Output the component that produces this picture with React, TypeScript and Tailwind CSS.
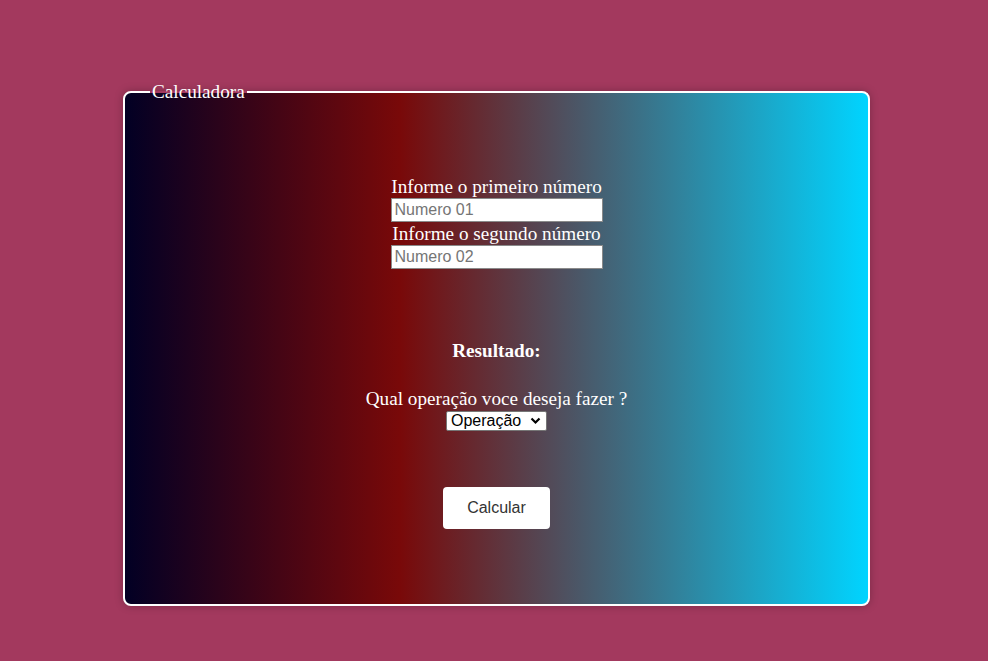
export default function App() {
  return (
    <div className="min-h-screen w-full bg-[#a3395e] pt-[81px]">
      {/* calculator card */}
      <fieldset className="ml-[123px] w-[747px] h-[525px] rounded-lg border-2 border-white bg-[linear-gradient(90deg,#020024_0%,#790909_37%,#00d4ff_100%)] shadow-[0_0_8px_rgba(0,0,0,0.25)] font-['Liberation_Serif',serif] text-[19.2px] text-white">
        <legend className="ml-[25px] px-[2px] leading-[22px]">Calculadora</legend>

        <div className="flex flex-col items-center pt-[72px]">
          <label className="leading-[23px]">Informe o primeiro número</label>
          <input
            type="text"
            placeholder="Numero 01"
            className="w-[212px] h-[24px] bg-white border border-[#8a8a8a] px-[3px] font-['Liberation_Sans',sans-serif] text-[16px] text-black placeholder:text-[#757575] outline-none"
          />
          <label className="leading-[23px]">Informe o segundo número</label>
          <input
            type="text"
            placeholder="Numero 02"
            className="w-[212px] h-[24px] bg-white border border-[#8a8a8a] px-[3px] font-['Liberation_Sans',sans-serif] text-[16px] text-black placeholder:text-[#757575] outline-none"
          />

          <h3 className="mt-[71px] font-bold leading-[22px]">Resultado:</h3>

          <p className="mt-[25px] leading-[23px]">Qual operação voce deseja fazer ?</p>
          <div className="relative flex mt-[1px]">
            <select className="block appearance-none w-[101px] h-[20px] bg-white border border-[#767676] rounded-[2px] pl-[4px] pr-[20px] font-['Liberation_Sans',sans-serif] text-[16px] leading-[18px] text-black">
              <option>Operação</option>
              <option>Soma</option>
              <option>Subtração</option>
              <option>Multiplicação</option>
              <option>Divisão</option>
            </select>
            <svg className="pointer-events-none absolute right-[6px] top-[6px]" width="11" height="8" viewBox="0 0 11 8">
              <path d="M1.5 1.5 L5.5 5.5 L9.5 1.5" fill="none" stroke="#000" strokeWidth="2.2" />
            </svg>
          </div>

          <button className="mt-[56px] w-[107px] h-[42px] rounded-[4px] bg-white font-['Liberation_Sans',sans-serif] text-[16px] text-[#333]">
            Calcular
          </button>
        </div>
      </fieldset>
    </div>
  );
}
